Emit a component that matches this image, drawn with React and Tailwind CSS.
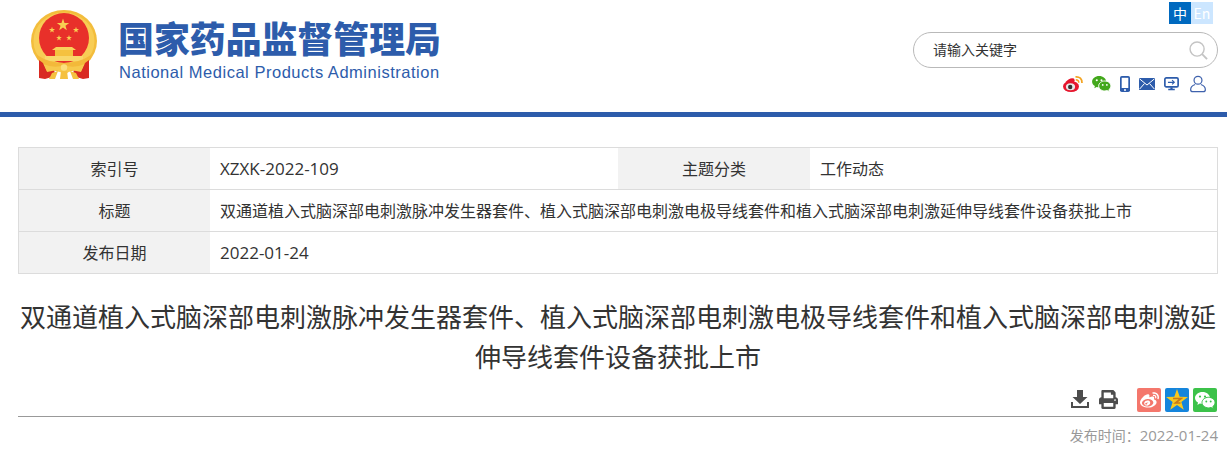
import React from "react";
import { FaWeibo, FaPrint } from "react-icons/fa";

const star = (cx, cy, r) => {
  const p = [];
  for (let i = 0; i < 10; i++) {
    const a = -Math.PI / 2 + (i * Math.PI) / 5;
    const rr = i % 2 ? r * 0.4 : r;
    p.push(`${(cx + rr * Math.cos(a)).toFixed(2)},${(cy + rr * Math.sin(a)).toFixed(2)}`);
  }
  return p.join(" ");
};

function Emblem() {
  return (
    <svg width="66" height="70" viewBox="0 0 66 70" className="block">
      <path d="M8 44 L22 50 L24 66 L14 69 L8 68 Z M58 44 L44 50 L42 66 L52 69 L58 68 Z" fill="#d92a22" />
      <ellipse cx="33" cy="31" rx="33" ry="31" fill="#f3bd3c" />
      <ellipse cx="33" cy="31" rx="30.5" ry="28.5" fill="#f8cd55" />
      <circle cx="33" cy="28" r="25" fill="#e8302a" />
      <polygon points={star(32, 15, 6.5)} fill="#f8cf52" />
      <polygon points={star(21, 20, 3.2)} fill="#f8cf52" />
      <polygon points={star(45, 20, 3.2)} fill="#f8cf52" />
      <polygon points={star(28, 28, 3)} fill="#f8cf52" />
      <polygon points={star(38, 28, 3)} fill="#f8cf52" />
      <path d="M25 37 H41 L45 40 H21 Z" fill="#f9d15b" />
      <rect x="24" y="40" width="18" height="6" fill="#f5c13f" />
      <rect x="14" y="46" width="38" height="5" fill="#f9d76b" />
      <path d="M6 45 Q18 53 33 53 Q48 53 60 45 L60 49 Q48 60 33 60 Q18 60 6 49 Z" fill="#f3b93a" />
      <path d="M12 54 Q24 59 33 55 Q42 59 54 54 L50 62 L40 60 L34 65 L26 60 L16 62 Z" fill="#f7c94d" />
      <path d="M21 63 L27 61 L24 69 L18 69 Z M45 63 L39 61 L42 69 L48 69 Z M30 61 H36 L37 69 H29 Z" fill="#f5c13f" />
      <circle cx="33" cy="57.5" r="3.2" fill="#fbe07e" />
      <path d="M8 50 L12 53 L16 63 L12 68 L8 67 Z M58 50 L54 53 L50 63 L54 68 L58 67 Z" fill="#d92a22" />
    </svg>
  );
}

function SearchIcon() {
  return (
    <svg width="19" height="19" viewBox="0 0 20 20" fill="none" stroke="#c4c4c4" strokeWidth="1.5">
      <circle cx="8.5" cy="8.5" r="7.4" />
      <path d="M13.8 13.8 L19 19" strokeWidth="2" />
    </svg>
  );
}

function WeiboColor() {
  return (
    <svg width="20" height="16" viewBox="0 0 20 16" fill="none">
      <ellipse cx="8" cy="10.5" rx="8" ry="5.5" fill="#e6162d" />
      <path d="M2.5 6 Q7 1 11 2.5 Q12.5 4.5 11 6 L6 9 Z" fill="#e6162d" />
      <ellipse cx="7.5" cy="10.8" rx="4.6" ry="3.5" fill="#e8e8e8" />
      <circle cx="7.2" cy="11" r="2.2" fill="#333" />
      <path d="M12.5 0.9 Q19 0.5 19 7" stroke="#f3a320" strokeWidth="1.7" />
      <path d="M12.8 3.8 Q15.8 3.8 15.8 6.8" stroke="#f3a320" strokeWidth="1.4" />
    </svg>
  );
}

function WechatShape({ main, cut, eye, w, h }) {
  return (
    <svg width={w} height={h} viewBox="0 0 20 17">
      <path d="M7.5 0 C11.6 0 15 2.7 15 6 C15 9.3 11.6 12 7.5 12 C6.5 12 5.6 11.8 4.8 11.6 L2.4 13 L3 10.6 C1.2 9.5 0 7.9 0 6 C0 2.7 3.4 0 7.5 0 Z" fill={main} />
      <circle cx="5" cy="4.6" r="1.1" fill={eye} />
      <circle cx="10" cy="4.6" r="1.1" fill={eye} />
      <path d="M13.5 5.3 C17 5.3 20 7.6 20 10.6 C20 12.2 19.2 13.6 17.8 14.6 L18.3 16.8 L16 15.5 C15.2 15.7 14.4 15.9 13.5 15.9 C10 15.9 7 13.5 7 10.6 C7 7.6 10 5.3 13.5 5.3 Z" fill={main} stroke={cut} strokeWidth="1" />
      <circle cx="11.3" cy="9.5" r="0.95" fill={eye} />
      <circle cx="15.7" cy="9.5" r="0.95" fill={eye} />
    </svg>
  );
}

function Phone() {
  return (
    <svg width="10" height="16" viewBox="0 0 10 16">
      <rect x="0" y="0" width="10" height="16" rx="1.8" fill="#2d5cab" />
      <rect x="1.7" y="1.8" width="6.6" height="10.2" fill="#fff" />
      <circle cx="5" cy="14" r="1" fill="#fff" />
    </svg>
  );
}

function Mail() {
  return (
    <svg width="16" height="12" viewBox="0 0 16 12">
      <rect width="16" height="12" fill="#2d5cab" />
      <path d="M0.5 0.8 L8 7 L15.5 0.8 M0.5 11.2 L5.5 5.5 M15.5 11.2 L10.5 5.5" stroke="#fff" strokeWidth="1" fill="none" />
    </svg>
  );
}

function Screen() {
  return (
    <svg width="15" height="14" viewBox="0 0 16 15" fill="none">
      <rect x="0.9" y="0.9" width="14.2" height="9.6" rx="1.5" stroke="#2d5cab" strokeWidth="1.8" />
      <path d="M4.2 5.7 H11 M8.6 3.4 L11 5.7 L8.6 8" stroke="#2d5cab" strokeWidth="1.2" />
      <path d="M6.8 11 H9.2 V12.6 H11.5 V14.2 H4.5 V12.6 H6.8 Z" fill="#2d5cab" />
    </svg>
  );
}

function User() {
  return (
    <svg width="16" height="18" viewBox="0 0 17 18" fill="none" stroke="#3f62ad" strokeWidth="1.3">
      <circle cx="8.5" cy="5" r="4.2" />
      <path d="M5.5 9.5 C2.5 10.5 0.7 12.5 0.7 15 C0.7 16.3 1.6 17.2 3 17.2 H14 C15.4 17.2 16.3 16.3 16.3 15 C16.3 12.5 14.5 10.5 11.5 9.5" />
    </svg>
  );
}

function Download() {
  return (
    <svg width="18" height="18" viewBox="0 0 18 18" fill="#4d4d4d">
      <path d="M6 0 H12 V7 H16.5 L9 14 L1.5 7 H6 Z" />
      <path d="M0 12 H2 V16 H16 V12 H18 V18 H0 Z" />
    </svg>
  );
}

function QZone() {
  return (
    <svg width="24" height="24" viewBox="0 0 24 24">
      <rect width="24" height="24" rx="2" fill="#1585dc" />
      <polygon points={star(12, 12.5, 11.5)} fill="#f9c81e" />
      <path d="M8 10.5 H16 L10.5 15 H15.5" fill="none" stroke="#c8791a" strokeWidth="1.7" />
    </svg>
  );
}

const labelCls = "shrink-0 h-full bg-[#f2f2f2] flex items-center justify-center pb-[2px]";
const rowCls = "flex items-center";
const cjk = { fontFamily: '"Noto Sans CJK SC",sans-serif' };

export default function App() {
  return (
    <div className="w-[1227px] h-[451px] overflow-hidden bg-white text-[#333]" style={cjk}>
      <header className="h-[112px] flex justify-between">
        <div className="flex pl-[31px] pt-[10px]">
          <Emblem />
          <div className="ml-[21px] mt-[5px] w-[325px] text-[#2d5cab]">
            <div className="text-[35.9px] leading-[44px] font-black whitespace-nowrap">
              国家药品监督管理局
            </div>
            <div className="mt-[3px] pl-[1px] text-[16.5px] leading-[20px] tracking-[0.52px] whitespace-nowrap" style={{ fontFamily: '"Liberation Sans",sans-serif' }}>
              National Medical Products Administration
            </div>
          </div>
        </div>
        <div className="w-[305px] mr-[9px] pt-[2px] flex flex-col items-end">
          <div className="flex mr-[5px] text-[14px] leading-[22px] text-center">
            <span className="w-[22px] h-[22px] bg-[#0069bf] text-white">中</span>
            <span className="w-[22px] h-[22px] bg-[#cce6ff] text-white">En</span>
          </div>
          <div className="mt-[8px] w-[305px] h-[36px] border border-[#b9b9b9] rounded-[18px] flex items-center justify-between pl-[19px] pr-[9px]">
            <span className="text-[14px] text-[#333] -mt-[1px]">请输入关键字</span>
            <SearchIcon />
          </div>
          <div className="mt-[7px] flex items-center h-[18px] mr-[12px]">
            <WeiboColor />
            <span className="ml-[9px] flex"><WechatShape main="#43a81c" cut="#ffffff" eye="#ffffff" w={19} h={16} /></span>
            <span className="ml-[9px] flex"><Phone /></span>
            <span className="ml-[9px] flex"><Mail /></span>
            <span className="ml-[9px] flex"><Screen /></span>
            <span className="ml-[11px] flex"><User /></span>
          </div>
        </div>
      </header>
      <div className="h-[5px] bg-[#2d5cab]" />

      <main className="mx-[18px] w-[1200px] pt-[30px]">
        <div className="border border-[#dcdcdc] text-[16px] text-[#333]">
          <div className={rowCls + " h-[42px] border-b border-[#dcdcdc]"}>
            <div className={labelCls + " w-[191px]"}>索引号</div>
            <div className="w-[408px] pl-[10px] text-[17px]" style={{ fontFamily: '"Open Sans",sans-serif' }}>XZXK-2022-109</div>
            <div className={labelCls + " w-[192px]"}>主题分类</div>
            <div className="pl-[10px] pb-[2px]">工作动态</div>
          </div>
          <div className={rowCls + " h-[42px] border-b border-[#dcdcdc]"}>
            <div className={labelCls + " w-[191px]"}>标题</div>
            <div className="pl-[10px] pb-[2px] whitespace-nowrap">双通道植入式脑深部电刺激脉冲发生器套件、植入式脑深部电刺激电极导线套件和植入式脑深部电刺激延伸导线套件设备获批上市</div>
          </div>
          <div className={rowCls + " h-[41px]"}>
            <div className={labelCls + " w-[191px]"}>发布日期</div>
            <div className="pl-[10px] text-[17px]" style={{ fontFamily: '"Open Sans",sans-serif' }}>2022-01-24</div>
          </div>
        </div>

        <h1 className="mt-[22px] text-center text-[26px] leading-[40px] font-normal text-[#333]">
          双通道植入式脑深部电刺激脉冲发生器套件、植入式脑深部电刺激电极导线套件和植入式脑深部电刺激延伸导线套件设备获批上市
        </h1>

        <div className="mt-[12px] h-[29px] flex items-start justify-end border-b border-[#999] pr-[1px]">
          <span className="flex mt-[2px]"><Download /></span>
          <FaPrint className="ml-[10px] mt-[2px] w-[19px] h-[19px] text-[#4d4d4d]" />
          <span className="ml-[19px] w-[24px] h-[24px] rounded-[2px] bg-[#f4776c] flex items-center justify-center">
            <FaWeibo className="w-[19px] h-[19px] text-white" />
          </span>
          <span className="ml-[4px] flex"><QZone /></span>
          <span className="ml-[4px] w-[24px] h-[24px] rounded-[2px] bg-[#3cc24a] flex items-center justify-center">
            <WechatShape main="#ffffff" cut="#3cc24a" eye="#3cc24a" w={20} h={17} />
          </span>
        </div>

        <div className="mt-[8px] flex justify-end items-center text-[14px] leading-[20px] text-[#999]">
          <span>发布时间：</span>
          <span className="text-[15px]" style={{ fontFamily: '"Open Sans",sans-serif' }}>2022-01-24</span>
        </div>
      </main>
    </div>
  );
}
